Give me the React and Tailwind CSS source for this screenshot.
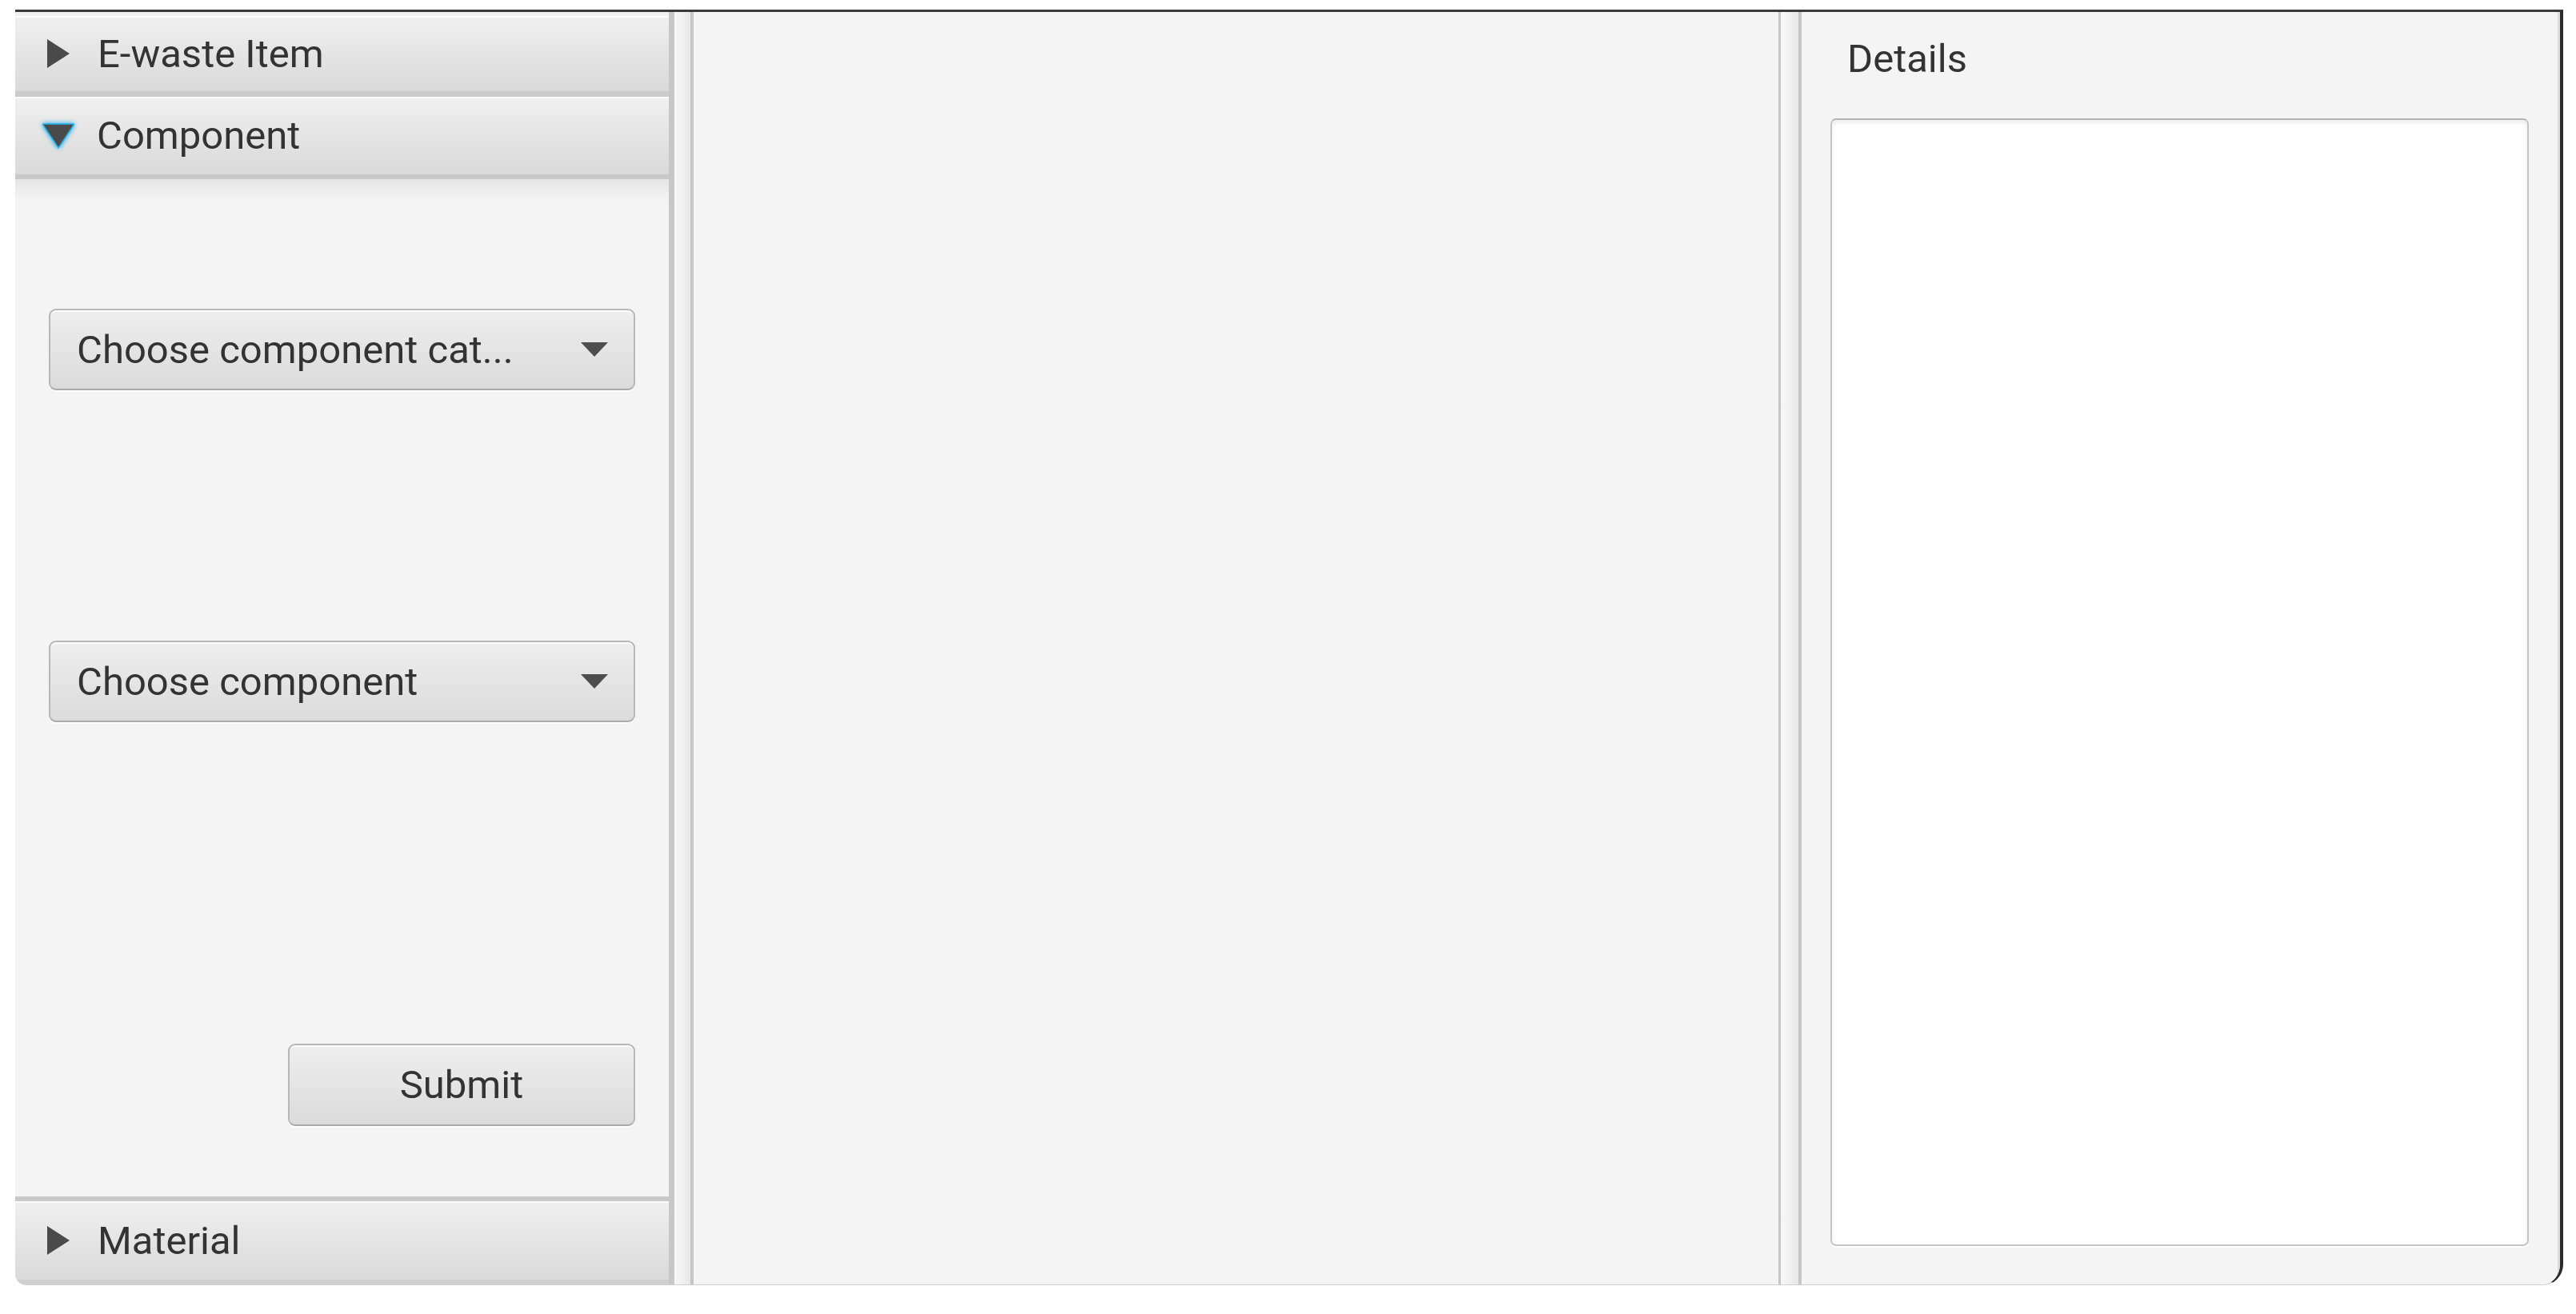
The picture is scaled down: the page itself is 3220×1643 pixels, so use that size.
import React from "react";

const font = { fontFamily: "Roboto, 'Noto Sans', 'Liberation Sans', sans-serif" };

function RightTri() {
  return (
    <svg width="30" height="36" viewBox="0 0 30 36" className="shrink-0">
      <polygon points="1,0 29,18 1,36" fill="#4a4a4a" />
    </svg>
  );
}

function DownTri() {
  return (
    <svg width="40" height="32" viewBox="0 0 40 32" className="shrink-0 drop-shadow-[0_0_3px_#0ea5e9]">
      <polygon points="0,1 40,1 20,31" fill="#4a4a4a" stroke="#22b4ee" strokeWidth="1.5" />
    </svg>
  );
}

function Header({ label, open, h }) {
  return (
    <div
      className={`flex items-center bg-gradient-to-b from-[#f0f0f0] to-[#d9d9d9] shadow-[inset_0_2px_0_rgba(255,255,255,0.8)] ${h}`}
    >
      <div className={open ? "pl-[34px] pr-[28px] flex items-center" : "pl-[39px] pr-[34px] flex items-center"}>
        {open ? <DownTri /> : <RightTri />}
      </div>
      <span className="text-[49px] leading-none text-[#333333]">{label}</span>
    </div>
  );
}

function Combo({ label }) {
  return (
    <div className="h-[102px] rounded-[9px] border-2 border-[#b7b7b7] border-b-[#a9a9a9] bg-gradient-to-b from-[#eeeeee] to-[#dbdbdb] shadow-[inset_0_2px_0_rgba(255,255,255,0.8),0_2px_0_rgba(255,255,255,0.9)] flex items-center pl-[33px] pr-[32px]">
      <span className="flex-1 text-[49px] leading-none text-[#333333] whitespace-nowrap">{label}</span>
      <svg width="34" height="18" viewBox="0 0 34 18">
        <polygon points="0,0 34,0 17,18" fill="#4e4e4e" />
      </svg>
    </div>
  );
}

export default function App() {
  return (
    <div className="w-[3220px] h-[1643px] bg-white overflow-hidden" style={font}>
      <div className="ml-[19px] mt-[12px] w-[3185px] h-[1595px] border-t-[3px] border-t-[#3a3a3a] border-r-[4px] border-r-[#2c2c2c] border-b-[1px] border-b-[#cfcfcf] rounded-br-[26px] rounded-bl-[14px] bg-[#f4f4f4] flex overflow-hidden">
        {/* Accordion */}
        <div className="w-[817px] flex flex-col">
          <div className="h-[5px] bg-[#f0f0f0]" />
          <Header label="E-waste Item" h="h-[94px]" />
          <div className="h-[7px] bg-[#cbcbcb]" />
          <Header label="Component" open h="h-[97px]" />
          <div className="h-[6px] bg-[#c9c9c9]" />
          <div className="flex-1 flex flex-col px-[42px] pt-[162px] bg-[linear-gradient(to_bottom,#e4e4e4,#f4f4f4_26px)]">
            <Combo label="Choose component cat..." />
            <div className="h-[313px]" />
            <Combo label="Choose component" />
            <div className="h-[402px]" />
            <div className="self-end w-[434px] h-[103px] rounded-[9px] border-2 border-[#b7b7b7] border-b-[#a9a9a9] bg-gradient-to-b from-[#eeeeee] to-[#dbdbdb] shadow-[inset_0_2px_0_rgba(255,255,255,0.8),0_2px_0_rgba(255,255,255,0.9)] flex items-center justify-center">
              <span className="text-[49px] leading-none text-[#333333]">Submit</span>
            </div>
          </div>
          <div className="h-[6px] bg-[#c9c9c9]" />
          <Header label="Material" h="h-[98px]" />
          <div className="h-[6px] bg-[#cfcfcf]" />
        </div>
        <div className="w-[7px] bg-[#c7c7c7]" />
        <div className="w-[20px] bg-gradient-to-r from-[#f7f7f7] via-[#f1f1f1] to-[#e7e7e7]" />
        <div className="w-[4px] bg-[#c6c6c6]" />

        {/* Middle */}
        <div className="flex-1 bg-[#f4f4f4]" />

        <div className="w-[3px] bg-[#c6c6c6]" />
        <div className="w-[22px] bg-gradient-to-r from-[#f7f7f7] via-[#f1f1f1] to-[#e7e7e7]" />
        <div className="w-[4px] bg-[#c6c6c6]" />

        {/* Right */}
        <div className="w-[945px] flex flex-col px-[36px] pb-[48px] bg-[#f4f4f4]">
          <div className="h-[133px] pt-[34px] pl-[21px]">
            <span className="block text-[49px] leading-none text-[#333333]">Details</span>
          </div>
          <div className="flex-1 bg-white rounded-[7px] border-2 border-[#c4c4c4] border-t-[#b4b4b4] shadow-[inset_0_4px_5px_rgba(0,0,0,0.07),0_2px_0_rgba(255,255,255,0.9)]" />
        </div>
        <div className="w-[3px] bg-[#dcdcdc]" />
      </div>
    </div>
  );
}
